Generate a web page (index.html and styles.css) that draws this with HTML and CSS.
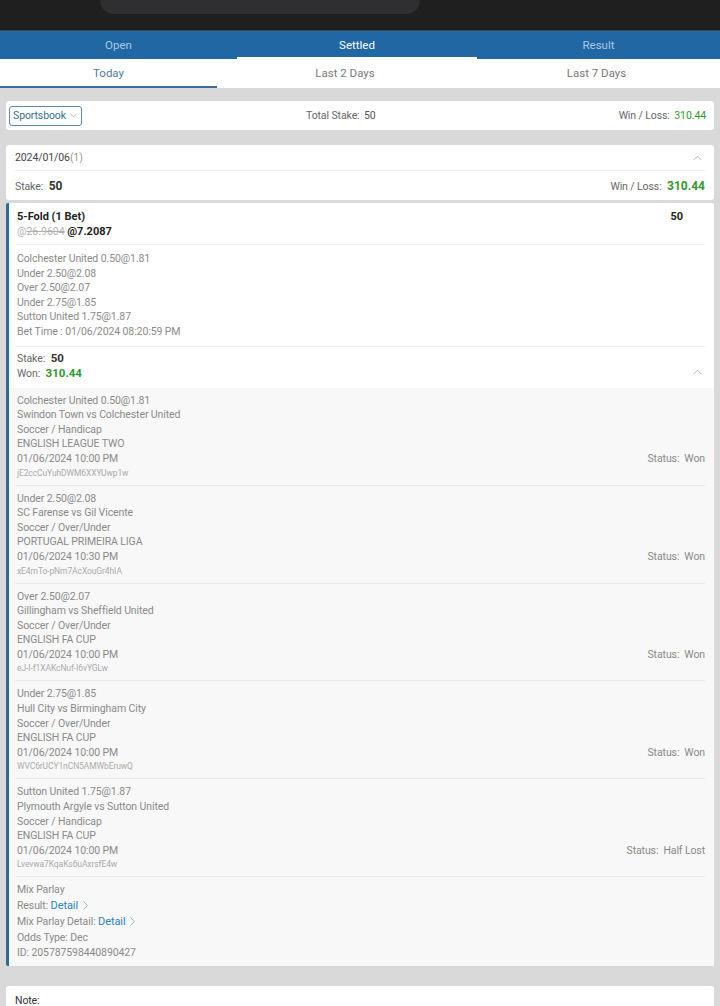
FILE: index.html
```html
<!DOCTYPE html>
<html>
<head>
<meta charset="utf-8">
<link rel="stylesheet" href="styles.css">
</head>
<body>
<header class="topbar"><div class="notch"></div></header>
<nav class="tabs">
  <div class="tab">Open</div>
  <div class="tab active">Settled</div>
  <div class="tab">Result</div>
</nav>
<nav class="subtabs">
  <div class="subtab active">Today</div>
  <div class="subtab">Last 2 Days</div>
  <div class="subtab">Last 7 Days</div>
</nav>
<main class="content">
  <section class="card filter">
    <div class="select">Sportsbook <svg class="chev-down" viewBox="0 0 8 5" width="7" height="5"><path d="M0.5 0.5 L4 4 L7.5 0.5" fill="none" stroke="#9aa9b6" stroke-width="0.9"/></svg></div>
    <div class="filter-mid"><span class="lbl">Total Stake:</span> <span class="val">50</span></div>
    <div class="filter-right"><span class="lbl">Win / Loss:</span> <span class="green">310.44</span></div>
  </section>

  <section class="card day">
    <div class="day-head">
      <span class="date">2024/01/06<span class="count">(1)</span></span>
      <svg class="chev-up" viewBox="0 0 10 6" width="9" height="6"><path d="M0.5 5.5 L5 1 L9.5 5.5" fill="none" stroke="#aaa" stroke-width="0.9"/></svg>
    </div>
    <div class="day-sum">
      <span><span class="lbl">Stake:</span> <b class="big">50</b></span>
      <span><span class="lbl">Win / Loss:</span> <b class="big green">310.44</b></span>
    </div>
  </section>

  <section class="card bet">
    <div class="bet-head">
      <div class="row-between"><b class="title">5-Fold (1 Bet)</b><b class="title stake">50</b></div>
      <div class="odds"><span class="strike-wrap">@<s>26.9604</s></span> <b>@7.2087</b></div>
    </div>
    <div class="bet-summary">
      <div>Colchester United 0.50@1.81</div>
      <div>Under 2.50@2.08</div>
      <div>Over 2.50@2.07</div>
      <div>Under 2.75@1.85</div>
      <div>Sutton United 1.75@1.87</div>
      <div>Bet Time : 01/06/2024 08:20:59 PM</div>
    </div>
    <div class="bet-result">
      <div class="res-lines">
        <div><span class="lbl">Stake:</span> <b class="dark">50</b></div>
        <div><span class="lbl">Won:</span> <b class="green">310.44</b></div>
      </div>
      <svg class="chev-up" viewBox="0 0 10 6" width="9" height="6"><path d="M0.5 5.5 L5 1 L9.5 5.5" fill="none" stroke="#aaa" stroke-width="0.9"/></svg>
    </div>
    <div class="legs">
      <div class="leg">
        <div class="leg-info">
          <div>Colchester United 0.50@1.81</div>
          <div>Swindon Town vs Colchester United</div>
          <div>Soccer / Handicap</div>
          <div>ENGLISH LEAGUE TWO</div>
          <div>01/06/2024 10:00 PM</div>
          <div class="leg-id">jE2ccCuYuhDWM6XXYUwp1w</div>
        </div>
        <div class="status">Status:&nbsp; Won</div>
      </div>
      <div class="leg">
        <div class="leg-info">
          <div>Under 2.50@2.08</div>
          <div>SC Farense vs Gil Vicente</div>
          <div>Soccer / Over/Under</div>
          <div>PORTUGAL PRIMEIRA LIGA</div>
          <div>01/06/2024 10:30 PM</div>
          <div class="leg-id">xE4mTo-pNm7AcXouGr4hIA</div>
        </div>
        <div class="status">Status:&nbsp; Won</div>
      </div>
      <div class="leg">
        <div class="leg-info">
          <div>Over 2.50@2.07</div>
          <div>Gillingham vs Sheffield United</div>
          <div>Soccer / Over/Under</div>
          <div>ENGLISH FA CUP</div>
          <div>01/06/2024 10:00 PM</div>
          <div class="leg-id">eJ-I-f1XAKcNuf-I6vYGLw</div>
        </div>
        <div class="status">Status:&nbsp; Won</div>
      </div>
      <div class="leg">
        <div class="leg-info">
          <div>Under 2.75@1.85</div>
          <div>Hull City vs Birmingham City</div>
          <div>Soccer / Over/Under</div>
          <div>ENGLISH FA CUP</div>
          <div>01/06/2024 10:00 PM</div>
          <div class="leg-id">WVC6rUCY1nCN5AMWbEruwQ</div>
        </div>
        <div class="status">Status:&nbsp; Won</div>
      </div>
      <div class="leg">
        <div class="leg-info">
          <div>Sutton United 1.75@1.87</div>
          <div>Plymouth Argyle vs Sutton United</div>
          <div>Soccer / Handicap</div>
          <div>ENGLISH FA CUP</div>
          <div>01/06/2024 10:00 PM</div>
          <div class="leg-id">Lvevwa7KqaKs6uAxrsfE4w</div>
        </div>
        <div class="status">Status:&nbsp; Half Lost</div>
      </div>
      <div class="bet-foot">
        <div>Mix Parlay</div>
        <div>Result: <a class="link">Detail <svg viewBox="0 0 5 9" width="5" height="9"><path d="M0.5 0.5 L4.5 4.5 L0.5 8.5" fill="none" stroke="#8fb0cc" stroke-width="0.9"/></svg></a></div>
        <div>Mix Parlay Detail: <a class="link">Detail <svg viewBox="0 0 5 9" width="5" height="9"><path d="M0.5 0.5 L4.5 4.5 L0.5 8.5" fill="none" stroke="#8fb0cc" stroke-width="0.9"/></svg></a></div>
        <div>Odds Type: Dec</div>
        <div>ID: 205787598440890427</div>
      </div>
    </div>
  </section>

  <section class="card note">Note:</section>
</main>
</body>
</html>
```

FILE: styles.css
```css
* { box-sizing: border-box; }
html, body { margin: 0; padding: 0; }
body {
  font-family: Roboto, "Noto Sans", "Liberation Sans", sans-serif;
  font-size: 10.5px;
  letter-spacing: -0.1px;
  color: #333;
  background: #d9d9d9;
  width: 720px;
  height: 1006px;
  overflow: hidden;
}
.topbar {
  height: 31px;
  background: #1f1f1f;
  border-bottom: 1px solid #3a4650;
  display: flex;
  justify-content: flex-start;
}
.notch {
  margin-left: 100px;
  width: 320px;
  height: 14px;
  background: #2f2f32;
  border-radius: 0 0 26px 26px;
}
.tabs {
  display: flex;
  height: 28px;
  background: #2067a3;
}
.tab {
  flex: 1;
  display: flex;
  align-items: center;
  justify-content: center;
  color: #a9c9e6;
  font-size: 11.5px;
  letter-spacing: 0;
  border-bottom: 2px solid transparent;
  padding-top: 1px;
}
.tab:nth-child(1) { flex: 0 0 237px; }
.tab.active {
  flex: 0 0 240px;
  color: #fff;
  border-bottom: 2px solid #fff;
}
.subtabs {
  display: flex;
  height: 29px;
  background: #fff;
}
.subtab {
  flex: 1 1 auto;
  display: flex;
  align-items: center;
  justify-content: center;
  color: #7a7a7a;
  font-size: 11.5px;
  letter-spacing: 0;
  border-bottom: 2px solid transparent;
}
.subtab:nth-child(1) { flex: 0 0 217px; }
.subtab:nth-child(2) { flex: 0 0 256px; }
.subtab.active {
  color: #4d7ba3;
  border-bottom: 2px solid #3a6d9c;
}
.content {
  padding: 13px 6px 0 6px;
  display: flex;
  flex-direction: column;
}
.card {
  background: #fff;
  border-radius: 3px;
}
.lbl { color: #666; }
.green { color: #2f9a2f; }
.filter {
  height: 29px;
  display: flex;
  align-items: center;
  padding: 0 8px 0 3px;
  color: #555;
}
.select {
  display: flex;
  align-items: center;
  gap: 4px;
  height: 20px;
  padding: 0 4px 0 3px;
  border: 1px solid #5d89ad;
  border-radius: 3px;
  color: #3a6d96;
  font-size: 10.5px;
}
.filter-mid {
  margin-left: 224px;
  flex: 1;
}
.filter-mid .val { color: #555; margin-left: 2px; }
.filter-right .green { margin-left: 2px; }
.day {
  margin-top: 15px;
  padding: 0 9px;
}
.day-head {
  height: 26px;
  display: flex;
  align-items: center;
  justify-content: space-between;
  border-bottom: 1px solid #eeeeee;
  color: #444;
}
.count { color: #999; }
.day-head .chev-up { margin-right: 3px; }
.day-sum {
  height: 29px;
  display: flex;
  align-items: center;
  justify-content: space-between;
  padding-top: 1px;
}
.big { font-size: 12px; font-weight: 700; color: #333; margin-left: 3px; letter-spacing: 0; }
.big.green { color: #2f9a2f; }
.bet {
  margin-top: 3px;
  border-left: 3px solid #2f6a9a;
  border-radius: 2px;
  overflow: hidden;
}
.bet-head {
  margin: 0 9px 0 6px;
  padding: 6px 0 5px 2px;
  border-bottom: 1px solid #eeeeee;
  line-height: 15px;
  letter-spacing: 0;
}
.row-between { display: flex; justify-content: space-between; }
.title { font-size: 11px; color: #222; }
.stake { margin-right: 22px; }
.odds { color: #222; font-size: 10.5px; }
.odds b { font-size: 11px; }
.strike-wrap { color: #b0b0b0; }
.strike-wrap s { color: #b0b0b0; }
.bet-summary {
  margin: 0 9px 0 6px;
  padding: 7px 0 6px 2px;
  border-bottom: 1px solid #eeeeee;
  color: #8a8a8a;
  line-height: 14.6px;
}
.bet-result {
  margin: 0 9px 0 6px;
  padding: 4px 0 7px 2px;
  line-height: 15px;
  display: flex;
  justify-content: space-between;
  align-items: flex-end;
}
.bet-result .chev-up { margin: 0 3px 6px 0; }
.dark { color: #333; font-size: 11.5px; margin-left: 3px; letter-spacing: 0; }
.res-lines .green { font-size: 11.5px; margin-left: 3px; letter-spacing: 0; }
.legs {
  background: #f8f8f8;
  padding: 0 9px 0 6px;
}
.leg {
  display: flex;
  justify-content: space-between;
  padding: 6px 0 6px 2px;
  border-bottom: 1px solid #e8e8e8;
  color: #8a8a8a;
  line-height: 14.6px;
}
.leg-id {
  font-size: 8.5px;
  color: #ababab;
  line-height: 12px;
}
.status {
  align-self: flex-end;
  margin-bottom: 12px;
  color: #888;
}
.bet-foot {
  padding: 5px 0 5px 2px;
  color: #8a8a8a;
  line-height: 15.7px;
}
.link {
  color: #2f7fbf;
  font-size: 11px;
  display: inline-flex;
  align-items: center;
  gap: 5px;
}
.note {
  margin-top: 20px;
  height: 40px;
  padding: 8px 9px;
  color: #333;
}
```
